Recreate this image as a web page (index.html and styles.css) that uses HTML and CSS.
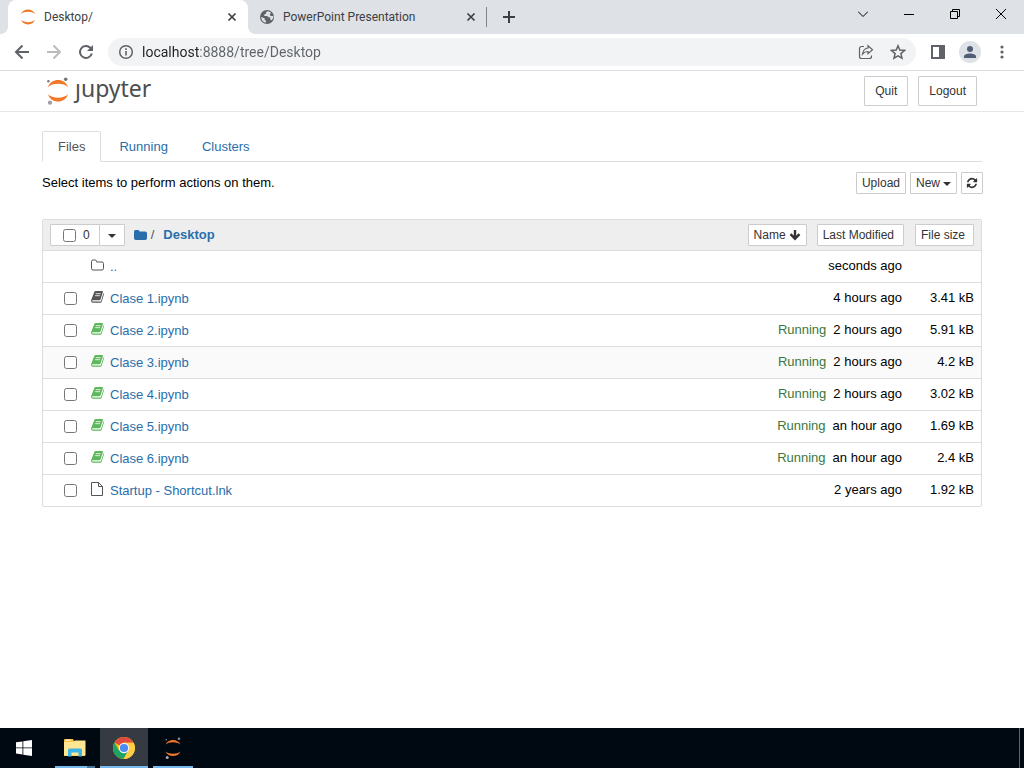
FILE: index.html
```html
<!DOCTYPE html>
<html lang="en">
<head>
    <meta charset="UTF-8">
    <meta name="viewport" content="width=device-width, initial-scale=1.0">
    <title>Desktop/</title>
    <link rel="stylesheet" href="styles.css">
</head>
<body>

<!-- Shared icons -->
<svg class="sprite" aria-hidden="true">
    <symbol id="close" viewBox="0 0 10 10"><path d="M1.500 1.500l7 7M8.500 1.500l-7 7" fill="none" stroke="currentColor" stroke-width="1.700"/></symbol>
    <symbol id="rings" viewBox="0 0 16 16">
        <path d="M1 5.200C3-1 13-1 15 5.200C12 2 4 2 1 5.200zM1 10.800C3 17 13 17 15 10.800C12 14 4 14 1 10.800z" fill="#f37726"/>
    </symbol>
    <symbol id="jupyter" viewBox="0 0 22 28">
        <path d="M1 10.200C4 .5 18 .5 21 10.200C17 5.700 5 5.700 1 10.200zM1 17.300C4 27 18 27 21 17.300C17 21.800 5 21.800 1 17.300z" fill="#f37726"/>
        <circle cx="18.700" cy="2.300" r="1.800" fill="#767677"/>
        <circle cx="1.400" cy="4.300" r="1.200" fill="#767677"/>
        <circle cx="3" cy="25.700" r="2.100" fill="#9e9e9e"/>
    </symbol>
    <symbol id="book" viewBox="0 0 13 13">
        <path d="M4.600.5h6.600q1 0 .7 1L9.600 8.800q-.3 1-1.300 1H1.800q-.7 0-.7.700 0 .6.900.6h7.200q.7 0 .9-.6l2.300-7.700q.7.400.5 1.200l-2.200 7.200q-.3 1-1.400 1H2Q.6 12.200.2 10.900L.1 9.800 3.300 1.600Q3.700.5 4.600.5z" fill="currentColor"/>
        <path d="M4.700 3.200h5M4.100 5.200h5" stroke="#fff" stroke-width=".8"/>
    </symbol>
</svg>

<!-- Browser tabs -->
<div class="tab-strip">
    <div class="tab active">
        <svg class="favicon"><use href="#rings"/></svg>
        <span class="tab-title">Desktop/</span>
        <button class="tab-close" aria-label="Close tab"><svg><use href="#close"/></svg></button>
    </div>
    <div class="tab">
        <svg class="favicon" viewBox="0 0 16 16">
            <circle cx="8" cy="8" r="7" fill="#5f6368"/>
            <path d="M8.500 2.200q-2 .6-1.500 2.600l-1.700.6v1.600H8q1 0 1 1.200h1.700q.6 0 .6.800v1.800l1.400.5q2-2 1.700-4.300L11.500 7 10.800 5l1.400-1.300Q10.500 2.200 8.500 2.200zM2.200 8q0 4.700 4.600 5.800l.3-1.900-1.400-1.200V9.200z" fill="#dee1e6"/>
        </svg>
        <span class="tab-title">PowerPoint Presentation</span>
        <button class="tab-close" aria-label="Close tab"><svg><use href="#close"/></svg></button>
    </div>
    <button class="new-tab" aria-label="New tab"><svg viewBox="0 0 12 12"><path d="M6 0v12M0 6h12" stroke="currentColor" stroke-width="2"/></svg></button>
    <div class="window-controls">
        <button aria-label="Search tabs"><svg viewBox="0 0 10 10"><path d="M0 2.500l5 5 5-5" fill="none" stroke="currentColor"/></svg></button>
        <button aria-label="Minimize"><svg viewBox="0 0 10 10"><path d="M0 5.500h10" stroke="currentColor"/></svg></button>
        <button aria-label="Restore"><svg viewBox="0 0 10 10"><path d="M.5 2.500h7v7h-7zM2.500 2.500v-2h7v7h-2" fill="none" stroke="currentColor"/></svg></button>
        <button aria-label="Close"><svg viewBox="0 0 10 10"><path d="M0 0l10 10M10 0L0 10" stroke="currentColor"/></svg></button>
    </div>
</div>

<!-- Browser toolbar -->
<div class="toolbar">
    <button aria-label="Back"><svg viewBox="0 0 16 16"><path d="M15 8H2M8.500 1.500L2 8l6.500 6.500" fill="none" stroke="currentColor" stroke-width="2"/></svg></button>
    <button class="dim" aria-label="Forward"><svg viewBox="0 0 16 16"><path d="M1 8h13M7.500 1.500L14 8l-6.500 6.500" fill="none" stroke="currentColor" stroke-width="2"/></svg></button>
    <button aria-label="Reload"><svg viewBox="0 0 16 16"><path d="M13.800 9.500a6 6 0 1 1-1.500-5.700l1.500 1.600" fill="none" stroke="currentColor" stroke-width="2"/><path d="M15 1v6H9z" fill="currentColor"/></svg></button>
    <div class="omnibox">
        <svg class="info" viewBox="0 0 16 16"><circle cx="8" cy="8" r="6.300" fill="none" stroke="currentColor" stroke-width="1.500"/><path d="M8 7v4.500M8 4.300v1.700" stroke="currentColor" stroke-width="1.600"/></svg>
        <input type="text" class="url" aria-label="Address" value="localhost:8888/tree/Desktop">
        <button aria-label="Share"><svg viewBox="0 0 16 16"><path d="M6 2.500H3.500a2 2 0 0 0-2 2v8a2 2 0 0 0 2 2h8a2 2 0 0 0 2-2V11.500" fill="none" stroke="currentColor" stroke-width="1.200"/><path d="M10 1.700l4.500 4L10 9.700V7.500C7.500 7.400 6 8.300 4.500 10.200 5 6.800 6.800 4.300 10 4z" fill="none" stroke="currentColor" stroke-width="1.200"/></svg></button>
        <button aria-label="Bookmark"><svg viewBox="0 0 16 16"><path d="M8 1.800l1.800 4.300 4.700.4-3.600 3.100 1.100 4.600L8 11.800l-4 2.400 1.100-4.600-3.600-3.100 4.700-.4z" fill="none" stroke="currentColor" stroke-width="1.500"/></svg></button>
    </div>
    <button aria-label="Side panel"><svg viewBox="0 0 16 16"><path d="M1 1h14v14H1zM3 3v10h6V3z" fill="currentColor" fill-rule="evenodd"/></svg></button>
    <button aria-label="Profile"><span class="avatar"><svg viewBox="0 0 16 16"><circle cx="8" cy="5" r="3" fill="#505d75"/><path d="M2 14v-1.500C2 8.500 14 8.500 14 12.500V14z" fill="#505d75"/></svg></span></button>
    <button aria-label="Menu"><svg viewBox="0 0 16 16"><g fill="currentColor"><circle cx="8" cy="3" r="1.600"/><circle cx="8" cy="8" r="1.600"/><circle cx="8" cy="13" r="1.600"/></g></svg></button>
</div>

<!-- Notebook dashboard -->
<header class="header">
    <a href="#" class="logo"><svg><use href="#jupyter"/></svg><span>ȷupyter</span></a>
    <button class="btn btn-large">Quit</button>
    <button class="btn btn-large">Logout</button>
</header>

<main class="dashboard">
    <nav class="nav-tabs">
        <a href="#files" class="active">Files</a>
        <a href="#running">Running</a>
        <a href="#clusters">Clusters</a>
    </nav>

    <div class="actions">
        <p>Select items to perform actions on them.</p>
        <button class="btn">Upload</button>
        <button class="btn">New <i class="caret"></i></button>
        <button class="btn btn-refresh" aria-label="Refresh"><svg viewBox="0 0 1792 1792"><path fill="currentColor" d="M1639 1056q0 5-1 7-64 268-268 434.500t-478 166.500q-146 0-282.500-55t-243.500-157l-129 129q-19 19-45 19t-45-19-19-45v-448q0-26 19-45t45-19h448q26 0 45 19t19 45-19 45l-137 137q71 66 161 102t187 36q134 0 250-65t186-179q11-17 53-117 8-23 30-23h192q13 0 22.500 9.500t9.500 22.500zm25-800v448q0 26-19 45t-45 19h-448q-26 0-45-19t-19-45 19-45l138-138q-148-137-349-137-134 0-250 65t-186 179q-11 17-53 117-8 23-30 23h-199q-13 0-22.500-9.500t-9.500-22.500v-7q65-268 270-434.500t480-166.500q146 0 284 55.500t245 156.500l130-129q19-19 45-19t45 19 19 45z"/></svg></button>
    </div>

    <table class="files">
        <thead>
            <tr>
                <th>
                    <div class="crumbs">
                        <div class="select-group">
                            <label class="btn"><input type="checkbox"> 0</label>
                            <button class="btn" aria-label="Select by type"><i class="caret"></i></button>
                        </div>
                        <a href="#" aria-label="Home"><svg class="home" viewBox="0 0 13 12"><path d="M0 2.500Q0 1 1.500 1h2.700q1.300 0 1.300 1.500h5.500q2 0 2 1.800v4.900q0 1.800-1.800 1.800H1.800Q0 11 0 9.200z" fill="currentColor"/></svg></a>
                        <span>/</span>
                        <a href="#" class="current">Desktop</a>
                    </div>
                </th>
                <th class="modified">
                    <div class="sorts">
                        <button class="btn">Name <svg class="arrow" viewBox="0 0 12 12"><path d="M6 1v8.500M1.500 5.200L6 9.700l4.500-4.500" fill="none" stroke="currentColor" stroke-width="2.400"/></svg></button>
                        <button class="btn">Last Modified</button>
                    </div>
                </th>
                <th class="size"><button class="btn">File size</button></th>
            </tr>
        </thead>
        <tbody>
            <tr>
                <td><div class="item folder"><svg class="icon" viewBox="0 0 13 13"><path d="M.5 3q0-1.500 1.500-1.500h2.200q1.300 0 1.300 1.500v.5h5.500q1.500 0 1.500 1.500v5q0 1.500-1.500 1.500H2Q.5 11.500.5 10z" fill="none" stroke="currentColor"/></svg><a href="#">..</a></div></td>
                <td class="modified">seconds ago</td>
                <td class="size"></td>
            </tr>
            <tr>
                <td><div class="item"><input type="checkbox" id="f1"><svg class="icon"><use href="#book"/></svg><a href="#">Clase 1.ipynb</a></div></td>
                <td class="modified">4 hours ago</td>
                <td class="size">3.41 kB</td>
            </tr>
            <tr>
                <td><div class="item"><input type="checkbox" id="f2"><svg class="icon green"><use href="#book"/></svg><a href="#">Clase 2.ipynb</a></div></td>
                <td class="modified"><span class="running">Running</span>2 hours ago</td>
                <td class="size">5.91 kB</td>
            </tr>
            <tr class="hovered">
                <td><div class="item"><input type="checkbox" id="f3"><svg class="icon green"><use href="#book"/></svg><a href="#">Clase 3.ipynb</a></div></td>
                <td class="modified"><span class="running">Running</span>2 hours ago</td>
                <td class="size">4.2 kB</td>
            </tr>
            <tr>
                <td><div class="item"><input type="checkbox" id="f4"><svg class="icon green"><use href="#book"/></svg><a href="#">Clase 4.ipynb</a></div></td>
                <td class="modified"><span class="running">Running</span>2 hours ago</td>
                <td class="size">3.02 kB</td>
            </tr>
            <tr>
                <td><div class="item"><input type="checkbox" id="f5"><svg class="icon green"><use href="#book"/></svg><a href="#">Clase 5.ipynb</a></div></td>
                <td class="modified"><span class="running">Running</span>an hour ago</td>
                <td class="size">1.69 kB</td>
            </tr>
            <tr>
                <td><div class="item"><input type="checkbox" id="f6"><svg class="icon green"><use href="#book"/></svg><a href="#">Clase 6.ipynb</a></div></td>
                <td class="modified"><span class="running">Running</span>an hour ago</td>
                <td class="size">2.4 kB</td>
            </tr>
            <tr>
                <td><div class="item"><input type="checkbox" id="f7"><svg class="icon" viewBox="0 0 13 14"><path d="M.5.500h7l4 4v9H.5zM7.500.500v4h4" fill="none" stroke="currentColor"/></svg><a href="#">Startup - Shortcut.lnk</a></div></td>
                <td class="modified">2 years ago</td>
                <td class="size">1.92 kB</td>
            </tr>
        </tbody>
    </table>
</main>

<!-- Windows taskbar -->
<footer class="taskbar">
    <button class="start" aria-label="Start"><svg viewBox="0 0 16 16"><path d="M0 2.300l6.500-.9v6.100H0zM7.300 1.300L16 0v7.500H7.300zM0 8.300h6.500v6.200L0 13.600zM7.300 8.300H16V16l-8.700-1.200z" fill="#fff"/></svg></button>
    <button class="task grouped" aria-label="File Explorer"><svg viewBox="0 0 24 24"><path d="M1 4q0-1 1-1h8l1 2h11v15H1z" fill="#f6c244"/><path d="M1 6h9l2-1.500h10.500V19q0 .5-.5.500H1.500Q1 19.500 1 19z" fill="#ffe693"/><path d="M2.500 3.700h5v1h-5z" fill="#fff"/><path d="M5 20.500V14q0-1.500 1.500-1.500h11q1.500 0 1.500 1.500v6.500h-3.500v-4h-7v4z" fill="#3db5e8"/></svg></button>
    <button class="task current" aria-label="Chrome"><svg viewBox="0 0 24 24"><circle cx="12" cy="12" r="11" fill="#fbc116"/><path d="M12 12L2.500 6.500A11 11 0 0 1 21.500 6.500H12z" fill="#e04a3f"/><path d="M2.500 6.500A11 11 0 0 0 11.500 23l5-8.500L12 12 7 14.500z" fill="#1da462"/><path d="M12 7h9.700A11 11 0 0 1 11.500 23l5-8.500z" fill="#ffcd46"/><circle cx="12" cy="12" r="5.200" fill="#f4f6f8"/><circle cx="12" cy="12" r="4.100" fill="#4c8bf5"/></svg></button>
    <button class="task" aria-label="Jupyter"><svg viewBox="0 0 24 24"><path d="M4.500 8.500C7 2.500 17 2.500 19.500 8.500C16 5.500 8 5.500 4.500 8.500zM4.500 15.500C7 21.500 17 21.500 19.500 15.500C16 18.500 8 18.500 4.500 15.500z" fill="#f37726"/><circle cx="18" cy="2.700" r="1.300" fill="#8a8a8a"/><circle cx="5.200" cy="3.700" r=".8" fill="#8a8a8a"/><circle cx="6.200" cy="21.500" r="1.500" fill="#aaa"/></svg></button>
    <button class="show-desktop" aria-label="Show desktop"></button>
</footer>

<script>
    // Name each row's tick box after its file
    document.querySelectorAll('.item input').forEach(box => {
        box.setAttribute('aria-label', 'Select ' + box.parentNode.querySelector('a').textContent);
    });
</script>

</body>
</html>
```
FILE: styles.css
```css
* {
    box-sizing: border-box;
}
body {
    display: flex;
    flex-direction: column;
    min-height: 100vh;
    margin: 0;
    background-color: #fff;
    color: #000;
    font-family: "Liberation Sans", Arial, sans-serif;
    font-size: 13px;
    line-height: 20px;
}
a {
    color: #296eaa;
    text-decoration: none;
}
button {
    font-family: inherit;
    padding: 0;
    border: none;
    background: none;
    cursor: pointer;
}
svg {
    flex: none;
}
.sprite {
    position: absolute;
    width: 0;
    height: 0;
}

/* browser tabs */
.tab-strip {
    display: flex;
    height: 34px;
    padding-left: 8px;
    background-color: #dee1e6;
    font-family: Roboto, sans-serif;
    font-size: 12px;
    color: #3c4043;
}
.tab {
    position: relative;
    display: flex;
    align-items: center;
    gap: 8px;
    flex: 0 1 239px;
    padding: 0 8px 0 11px;
}
.tab.active {
    flex-basis: 240px;
    padding-left: 12px;
    background-color: #fff;
    border-radius: 8px 8px 0 0;
}
.tab.active::before,
.tab.active::after {
    content: "";
    position: absolute;
    bottom: 0;
    width: 8px;
    height: 8px;
}
.tab.active::before {
    left: -8px;
    background: radial-gradient(circle at 0 0, transparent 8px, #fff 8px);
}
.tab.active::after {
    right: -8px;
    background: radial-gradient(circle at 100% 0, transparent 8px, #fff 8px);
}
.tab:not(.active)::after {
    content: "";
    position: absolute;
    right: 0;
    width: 1px;
    height: 20px;
    background-color: #80868b;
}
.favicon {
    width: 16px;
    height: 16px;
}
.tab-title {
    flex: 1;
}
.tab-close {
    display: flex;
    align-items: center;
    justify-content: center;
    width: 16px;
    height: 16px;
    color: #3c4043;
}
.tab-close svg {
    width: 10px;
    height: 10px;
}
.new-tab {
    display: flex;
    align-items: center;
    justify-content: center;
    width: 44px;
    color: #3c4043;
}
.new-tab svg {
    width: 12px;
    height: 12px;
}
.window-controls {
    display: flex;
    height: 28px;
    margin-left: auto;
}
.window-controls button {
    display: flex;
    align-items: center;
    justify-content: center;
    width: 46px;
    color: #000;
}
.window-controls svg {
    width: 10px;
    height: 10px;
}

/* browser toolbar */
.toolbar {
    display: flex;
    align-items: center;
    height: 37px;
    padding: 0 6px;
    border-bottom: 1px solid #dadce0;
    color: #5f6368;
}
.toolbar button {
    display: flex;
    align-items: center;
    justify-content: center;
    width: 32px;
    height: 28px;
    color: inherit;
}
.toolbar svg {
    width: 16px;
    height: 16px;
}
.toolbar .dim {
    color: #babcbe;
}
.omnibox {
    display: flex;
    align-items: center;
    flex: 1;
    height: 28px;
    margin: 0 6px;
    padding: 0 2px 0 10px;
    border-radius: 14px;
    background-color: #f1f3f4;
}
.url {
    flex: 1;
    min-width: 0;
    margin-left: 8px;
    padding: 0;
    border: none;
    outline: none;
    font-family: Roboto, sans-serif;
    font-size: 14px;
    /* host in black, path in grey */
    color: transparent;
    background: linear-gradient(to right, #202124 57px, #5f6368 57px);
    -webkit-background-clip: text;
    background-clip: text;
}
.avatar {
    display: flex;
    align-items: center;
    justify-content: center;
    width: 22px;
    height: 22px;
    border-radius: 50%;
    background-color: #dee1e6;
}

/* dashboard header */
.header {
    display: flex;
    align-items: center;
    gap: 10px;
    height: 41px;
    padding: 0 47px;
    border-bottom: 1px solid #e7e7e7;
}
.logo {
    display: flex;
    align-items: center;
    gap: 6px;
    margin-right: auto;
    color: #4e4e4e;
    font-family: "Noto Sans", sans-serif;
    font-size: 23px;
}
.logo span {
    padding-bottom: 6px;
}
.logo svg {
    width: 22px;
    height: 28px;
}
.btn {
    display: inline-flex;
    align-items: center;
    gap: 3px;
    height: 22px;
    padding: 0 5px;
    border: 1px solid #ccc;
    border-radius: 1px;
    background-color: #fff;
    color: #333;
    font-size: 12px;
    font-weight: normal;
    white-space: nowrap;
}
.btn-large {
    height: 30px;
    padding: 0 10px;
}
.btn-refresh {
    padding: 0 4px;
}
.btn-refresh svg {
    width: 12px;
    height: 12px;
}
.caret {
    margin-top: 2px;
    border-top: 4px solid #333;
    border-left: 4px solid transparent;
    border-right: 4px solid transparent;
}

/* dashboard */
.dashboard {
    flex: 1;
    padding: 19px 42px 0;
}
.nav-tabs {
    display: flex;
    gap: 2px;
    border-bottom: 1px solid #ddd;
}
.nav-tabs a {
    margin-bottom: -1px;
    padding: 5px 15px;
    border: 1px solid transparent;
    height: 31px;
    line-height: 20px;
}
.nav-tabs .active {
    border-color: #ddd #ddd #fff;
    border-radius: 2px 2px 0 0;
    color: #555;
    background-color: #fff;
}
.actions {
    display: flex;
    align-items: center;
    gap: 4px;
    margin-right: -1px;
    padding: 10px 0 25px;
}
.actions p {
    flex: 1;
    margin: 0;
}
.files {
    width: 100%;
    border: 1px solid #ddd;
    border-radius: 2px;
    border-spacing: 0;
}
.files th {
    height: 30px;
    padding: 0;
    background-color: #eee;
    font-weight: normal;
    text-align: left;
}
.files td {
    height: 32px;
    padding: 0;
    border-top: 1px solid #ddd;
}
.files .hovered {
    background-color: #fafafa;
}
.files .modified {
    width: 170px;
    text-align: right;
}
.files .size {
    width: 77px;
    padding-right: 7px;
    text-align: right;
}
.files td.modified {
    padding-right: 2px;
}
.files td.modified,
.files td.size {
    padding-bottom: 2px;
}
.files th .btn {
    vertical-align: middle;
}
.files .size .btn {
    padding-right: 8px;
}
.sorts {
    display: flex;
    justify-content: flex-end;
    gap: 10px;
}
.sorts .btn:last-child {
    padding-right: 9px;
}
.arrow {
    width: 12px;
    height: 12px;
}
.crumbs {
    display: flex;
    align-items: center;
    padding-left: 7px;
}
.crumbs a {
    display: flex;
}
.crumbs span {
    margin: 0 9px 0 4px;
    color: #555;
}
.home {
    width: 13px;
    height: 12px;
}
.current {
    font-weight: bold;
}
.select-group {
    display: flex;
    margin-right: 9px;
}
.select-group label {
    gap: 7px;
    padding: 0 9px 0 12px;
    margin-right: -1px;
}
.select-group button {
    padding: 0 8px;
}
input[type="checkbox"] {
    width: 13px;
    height: 13px;
    margin: 0;
}
.item {
    display: flex;
    align-items: center;
    padding-left: 21px;
}
.item.folder {
    padding-left: 48px;
}
.icon {
    width: 13px;
    height: 14px;
    margin: 0 6px 3px 0;
    color: #555;
}
.item input + .icon {
    margin-left: 14px;
}
.icon.green {
    color: #5cb85c;
}
.running {
    margin-right: 7px;
    color: #3c763d;
}

/* taskbar */
.taskbar {
    display: flex;
    height: 40px;
    background-color: #000811;
}
.taskbar button {
    display: flex;
    align-items: center;
    justify-content: center;
}
.start {
    width: 48px;
    margin-right: 7px;
}
.start svg {
    width: 16px;
    height: 16px;
}
.task {
    width: 40px;
    margin-right: 5px;
    padding-top: 2px;
    border-bottom: 2px solid #76b9ed;
}
.taskbar .task {
    padding-top: 2px;
}
.task svg {
    width: 24px;
    height: 24px;
}
.task.grouped {
    border-image: linear-gradient(to right, #76b9ed 31px, #4a759a 31px) 2;
}
.task.current {
    width: 48px;
    background-color: #363b43;
}
.taskbar .show-desktop {
    width: 5px;
    margin-left: auto;
    border-left: 1px solid #5d636b;
}
```
